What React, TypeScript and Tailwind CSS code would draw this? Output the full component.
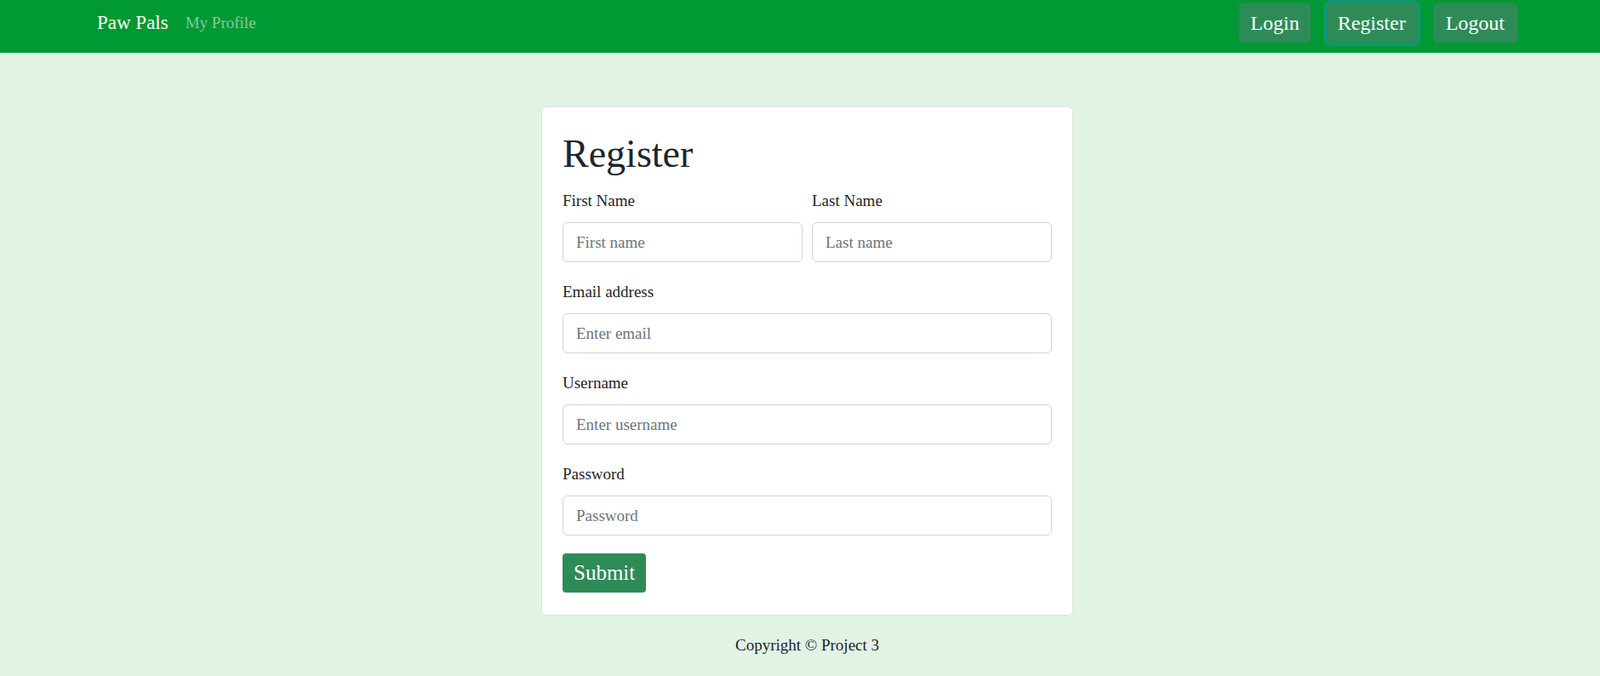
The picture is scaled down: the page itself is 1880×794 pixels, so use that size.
const fields = [
  { label: 'Email address', placeholder: 'Enter email', type: 'email' },
  { label: 'Username', placeholder: 'Enter username', type: 'text' },
  { label: 'Password', placeholder: 'Password', type: 'password' },
];

const inputCls =
  'block w-full h-[47px] px-[15px] rounded-[6px] border border-[#ced4da] bg-white text-[19px] text-[#212529] placeholder:text-[#6c757d] outline-none';

function Field({ label, placeholder, type }: { label: string; placeholder: string; type: string }) {
  return (
    <div className="mb-[21px]">
      <label className="block mb-[11px] text-[19px] leading-[28px]">{label}</label>
      <input type={type} placeholder={placeholder} className={inputCls} />
    </div>
  );
}

export default function App() {
  return (
    <div
      className="min-h-[794px] bg-[#e1f3e4] text-[#212529]"
      style={{ fontFamily: '"Liberation Serif", "Times New Roman", serif' }}
    >
      <nav className="h-[62px] bg-[#009933] pl-[17px]">
        <div className="mx-[97px] flex items-center justify-between pt-[4px]">
          <div className="flex items-center gap-5">
            <a href="#" className="text-[23px] leading-[34px] text-white">Paw Pals</a>
            <a href="#" className="text-[19px] leading-[28px] text-[#80cc9b]">My Profile</a>
          </div>
          <div className="flex items-center gap-[19px]">
            <button className="h-[46px] px-[13px] rounded-[4px] bg-[#2e8b57] text-[24px] text-white">Login</button>
            <button className="h-[46px] px-[13px] rounded-[4px] bg-[#2e8b57] text-[24px] text-white ring-4 ring-[#0f9870]">
              Register
            </button>
            <button className="h-[46px] px-[15px] rounded-[4px] bg-[#2e8b57] text-[24px] text-white">Logout</button>
          </div>
        </div>
      </nav>

      <main className="pl-[17px] pt-[63px]">
        <div className="mx-auto w-[625px] rounded-[6px] border border-[#dde3df] bg-white px-[24px] pt-[27px] pb-[26px]">
          <h1 className="text-[46px] leading-[55px] mb-[14px]">Register</h1>
          <div className="grid grid-cols-2 gap-x-[11px] mb-[21px]">
            <div>
              <label className="block mb-[11px] text-[19px] leading-[28px]">First Name</label>
              <input placeholder="First name" className={inputCls} />
            </div>
            <div>
              <label className="block mb-[11px] text-[19px] leading-[28px]">Last Name</label>
              <input placeholder="Last name" className={inputCls} />
            </div>
          </div>
          {fields.map((f) => (
            <Field key={f.label} {...f} />
          ))}
          <button className="h-[46px] px-[13px] rounded-[4px] bg-[#2e8b57] text-[25px] text-white">Submit</button>
        </div>
        <p className="mt-[21px] text-center text-[19px]">Copyright © Project 3</p>
      </main>
    </div>
  );
}
